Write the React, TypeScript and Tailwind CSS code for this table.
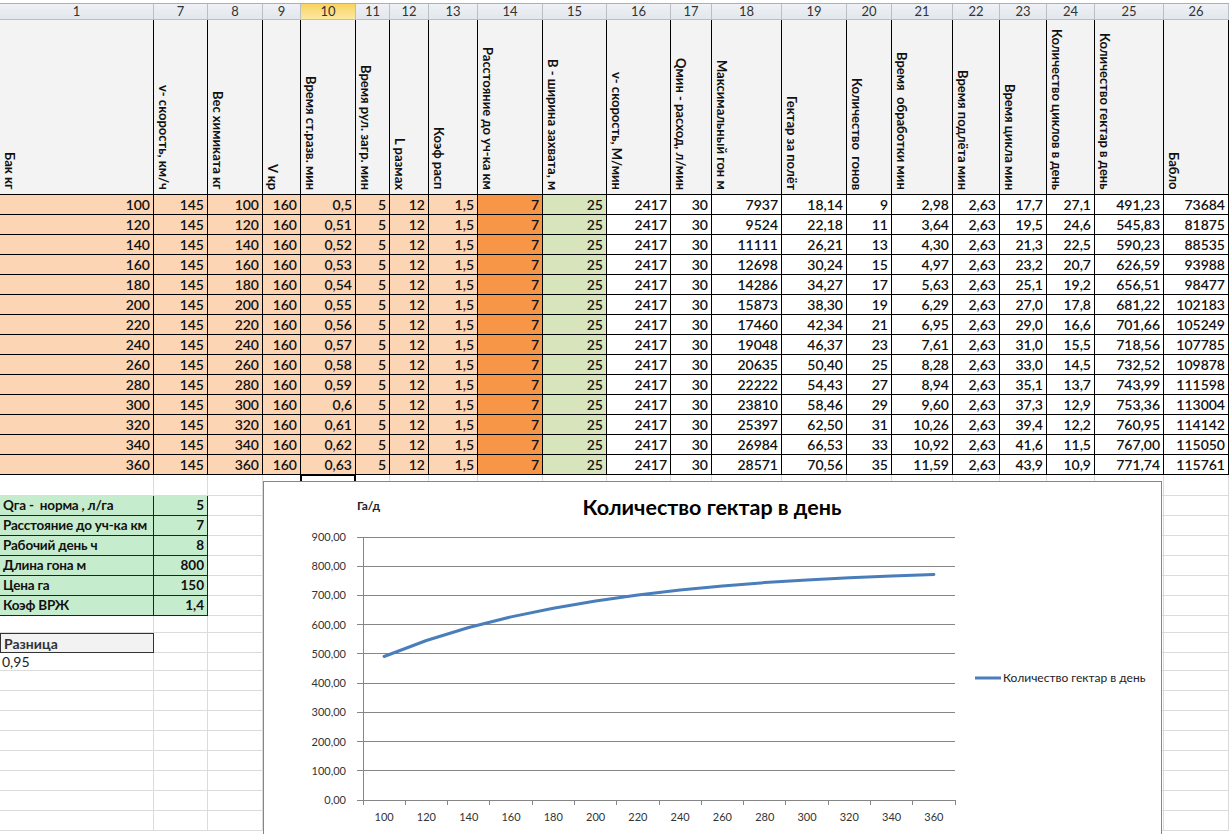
import React from 'react';

const GRID =
  'grid grid-cols-[154px_54px_55px_38px_55px_34px_39px_49px_65px_64px_64px_41px_70px_65px_45px_61px_47px_47px_48px_69px_65px]';

const heads = ['1', '7', '8', '9', '10', '11', '12', '13', '14', '15', '16', '17', '18', '19', '20', '21', '22', '23', '24', '25', '26'];

const labels = [
  'Бак кг',
  'v- скорость, км/ч',
  'Вес химиката кг',
  'V кр',
  'Время ст.разв. мин',
  'Время рул. загр. мин',
  'L размах',
  'Коэф расп',
  'Расстояние до уч-ка км',
  'В - ширина захвата, м',
  'v- скорость, М/мин',
  'Qмин - расход, л/мин',
  'Максимальный гон м',
  'Гектар за полёт',
  'Количество  гонов',
  'Время  обработки мин',
  'Время подлёта мин',
  'Время цикла мин',
  'Количество циклов в день',
  'Количество гектар в день',
  'Бабло',
];

const raw = `100|0,5|7937|18,14|9|2,98|17,7|27,1|491,23|73684
120|0,51|9524|22,18|11|3,64|19,5|24,6|545,83|81875
140|0,52|11111|26,21|13|4,30|21,3|22,5|590,23|88535
160|0,53|12698|30,24|15|4,97|23,2|20,7|626,59|93988
180|0,54|14286|34,27|17|5,63|25,1|19,2|656,51|98477
200|0,55|15873|38,30|19|6,29|27,0|17,8|681,22|102183
220|0,56|17460|42,34|21|6,95|29,0|16,6|701,66|105249
240|0,57|19048|46,37|23|7,61|31,0|15,5|718,56|107785
260|0,58|20635|50,40|25|8,28|33,0|14,5|732,52|109878
280|0,59|22222|54,43|27|8,94|35,1|13,7|743,99|111598
300|0,6|23810|58,46|29|9,60|37,3|12,9|753,36|113004
320|0,61|25397|62,50|31|10,26|39,4|12,2|760,95|114142
340|0,62|26984|66,53|33|10,92|41,6|11,5|767,00|115050
360|0,63|28571|70,56|35|11,59|43,9|10,9|771,74|115761`;

const rows: string[][] = raw.split('\n').map((line) => {
  const [a, c10, c18, c19, c20, c21, c23, c24, c25, c26] = line.split('|');
  return [a, '145', a, '160', c10, '5', '12', '1,5', '7', '25', '2417', '30', c18, c19, c20, c21, '2,63', c23, c24, c25, c26];
});

const chartVals = rows.map((r) => parseFloat(r[19].replace(',', '.')));

function cellBg(i: number) {
  if (i <= 7) return 'bg-[#fcd5b4]';
  if (i === 8) return 'bg-[#f79646]';
  if (i === 9) return 'bg-[#d8e4bc]';
  return 'bg-white';
}

const greenRows: [string, string][] = [
  ['Qга -  норма , л/га', '5'],
  ['Расстояние до уч-ка км', '7'],
  ['Рабочий день ч', '8'],
  ['Длина гона м', '800'],
  ['Цена га', '150'],
  ['Коэф ВРЖ', '1,4'],
];

const belowHeights = [21, 20, 20, 20, 20, 20, 20, 17, 20, 18, 20, 20, 20, 20, 20, 20, 20, 20];
const hClass: Record<number, string> = { 21: 'h-[21px]', 20: 'h-[20px]', 17: 'h-[17px]', 18: 'h-[18px]' };

function Chart() {
  const x0 = 99;
  const x1 = 691;
  const cw = (x1 - x0) / 14;
  const yOf = (v: number) => 318 - v * 0.2922;
  const ticks = [0, 100, 200, 300, 400, 500, 600, 700, 800, 900];
  const pts = chartVals.map((v, i) => `${(x0 + cw * (i + 0.5)).toFixed(1)},${yOf(v).toFixed(1)}`).join(' ');
  return (
    <div className="absolute left-[263px] top-[481px] w-[899px] h-[360px] border border-[#868686] bg-white">
      <svg width="897" height="358" className="block font-['Lato','Liberation_Sans',sans-serif]">
        <text x="448" y="33" textAnchor="middle" fontSize="21.5" fontWeight="700" fill="#000">
          Количество гектар в день
        </text>
        <text x="93" y="28" fontSize="12" fontWeight="700" fill="#222">
          Га/д
        </text>
        {ticks.map((v) => (
          <g key={v}>
            <line x1={x0 - 6} x2={x1} y1={yOf(v)} y2={yOf(v)} stroke="#868686" strokeWidth="1" shapeRendering="crispEdges" />
            <text x={x0 - 17} y={yOf(v) + 4} textAnchor="end" fontSize="11" fill="#333">
              {v.toFixed(2).replace('.', ',')}
            </text>
          </g>
        ))}
        <line x1={x0} x2={x0} y1={yOf(900)} y2={yOf(0)} stroke="#868686" strokeWidth="1" shapeRendering="crispEdges" />
        {Array.from({ length: 15 }).map((_, i) => (
          <line key={i} x1={x0 + cw * i} x2={x0 + cw * i} y1={yOf(0)} y2={yOf(0) + 5} stroke="#868686" strokeWidth="1" shapeRendering="crispEdges" />
        ))}
        {rows.map((r, i) => (
          <text key={i} x={x0 + cw * (i + 0.5)} y="339" textAnchor="middle" fontSize="11" fill="#333">
            {r[0]}
          </text>
        ))}
        <polyline points={pts} fill="none" stroke="#4a7ebb" strokeWidth="3" strokeLinejoin="round" strokeLinecap="round" />
        <line x1="711" x2="737" y1="196" y2="196" stroke="#4a7ebb" strokeWidth="3" />
        <text x="739" y="200" fontSize="12" fill="#222">
          Количество гектар в день
        </text>
      </svg>
    </div>
  );
}

export default function App() {
  return (
    <div className="relative w-[1229px] h-[834px] overflow-hidden bg-white font-['Lato','Liberation_Sans',sans-serif] text-black">
      {/* column header */}
      <div className="h-[3px] bg-white" />
      <div className={`${GRID} border-t border-[#a9b0b9]`}>
        {heads.map((h, i) => (
          <div
            key={h}
            className={`h-[16px] border-r border-b border-[#b9bfc7] text-center text-[13px] leading-[15px] text-[#333] ${
              i === 4 ? 'bg-gradient-to-b from-[#f8d35c] to-[#fde8a2]' : 'bg-gradient-to-b from-[#eef1f5] to-[#e2e7ed]'
            }`}
          >
            {h}
          </div>
        ))}
      </div>
      {/* label row */}
      <div className={GRID}>
        {labels.map((l, i) => (
          <div key={i} className="h-[175px] border-r border-b border-black bg-[#f3f3f3] flex flex-col justify-end items-start pl-[2px] pb-[4px]">
            <span className="[writing-mode:vertical-rl] whitespace-pre font-bold text-[13px] leading-[16px] text-[#111]">{l}</span>
          </div>
        ))}
      </div>
      {/* data rows */}
      {rows.map((r, ri) => (
        <div key={ri} className={GRID}>
          {r.map((v, ci) => (
            <div
              key={ci}
              className={`h-[20px] border-r border-b border-black text-right pr-[3px] text-[14px] leading-[19px] font-semibold text-[#111] ${cellBg(ci)}`}
            >
              {v}
            </div>
          ))}
        </div>
      ))}
      {/* empty sheet area */}
      {belowHeights.map((h, ri) => (
        <div key={ri} className={GRID}>
          {heads.map((_, ci) => {
            const isGreen = ri >= 1 && ri <= 6 && ci <= 1;
            const isDiff = ri === 8 && ci === 0;
            const isVal = ri === 9 && ci === 0;
            let cls = `${hClass[h]} border-r border-b border-[#d9dbdd] bg-white`;
            let content: React.ReactNode = null;
            if (isGreen) {
              const g = greenRows[ri - 1];
              cls = `${hClass[h]} border-r border-b border-[#222] bg-[#c6ecce] font-bold text-[13.5px] leading-[19px] text-[#111] ${
                ci === 0 ? 'pl-[3px] whitespace-pre tracking-[-0.2px]' : 'text-right pr-[3px]'
              }`;
              content = ci === 0 ? g[0] : g[1];
            } else if (isDiff) {
              cls = `${hClass[h]} border border-[#333] bg-[#f2f2f2] font-bold text-[14px] leading-[19px] pl-[3px] text-[#333]`;
              content = 'Разница';
            } else if (isVal) {
              cls = `${hClass[h]} border-r border-b border-[#d9dbdd] bg-white text-[14px] leading-[17px] pl-[2px] text-[#222]`;
              content = '0,95';
            }
            if (ri === 0 && ci === 4) {
              return (
                <div key={ci} className={`${cls} relative`}>
                  <div className="absolute -left-[1px] -top-[1px] w-[56px] h-[22px] border-2 border-black" />
                </div>
              );
            }
            return (
              <div key={ci} className={cls}>
                {content}
              </div>
            );
          })}
        </div>
      ))}
      <Chart />
    </div>
  );
}
